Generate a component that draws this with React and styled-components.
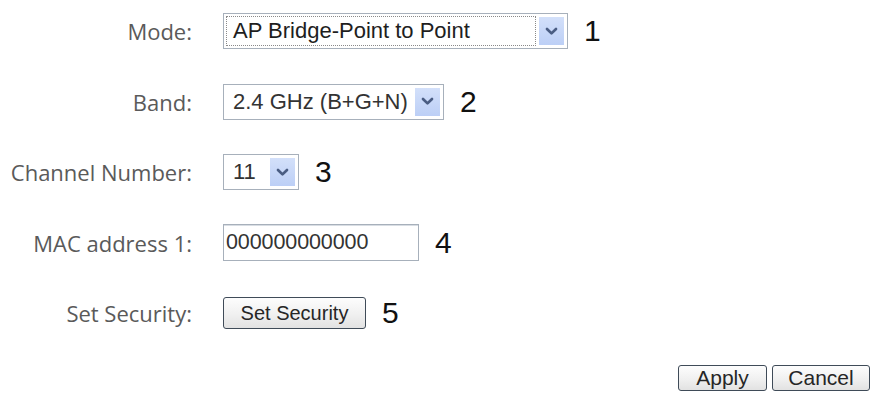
import React from "react";
import styled, { createGlobalStyle } from "styled-components";

const GlobalStyle = createGlobalStyle`
  html, body {
    margin: 0;
    padding: 0;
    background: #ffffff;
  }
  body {
    width: 879px;
    height: 401px;
    overflow: hidden;
    font-family: "Liberation Sans", Arial, sans-serif;
  }
`;

const Page = styled.div`
  width: 879px;
  height: 401px;
  box-sizing: border-box;
  padding-top: 13px;
`;

const Form = styled.div`
  display: grid;
  grid-template-columns: 192px auto;
  grid-auto-rows: 36px;
  column-gap: 31px;
  row-gap: 34.5px;
  align-items: center;
`;

const Label = styled.div`
  font-family: "Open Sans", "DejaVu Sans", sans-serif;
  font-size: 22px;
  color: #5a5a5a;
  text-align: right;
  white-space: nowrap;
`;

const Field = styled.div`
  display: flex;
  align-items: center;
  gap: 16px;
  height: 36px;
`;

const SelectBox = styled.div`
  box-sizing: border-box;
  width: ${(p) => p.width}px;
  height: 36px;
  border: 1px solid #a7b0bb;
  background: #fff;
  display: flex;
  align-items: center;
  padding: 2px 3px 2px 2px;
`;

const SelectValue = styled.div`
  flex: 1;
  height: 100%;
  box-sizing: border-box;
  display: flex;
  align-items: center;
  padding-left: 6px;
  font-size: 22px;
  color: ${(p) => (p.focused ? "#1e1e1e" : "#333")};
  border: 1px ${(p) => (p.focused ? "dotted #8a8a8a" : "solid transparent")};
  margin-right: 3px;
  white-space: nowrap;
`;

const ArrowButton = styled.div`
  width: 25px;
  height: 28px;
  flex-shrink: 0;
  background: linear-gradient(180deg, #d3e0fa 0%, #bccff6 100%);
  display: flex;
  align-items: center;
  justify-content: center;
`;

const Chevron = () => (
  <svg width="13" height="9" viewBox="0 0 13 9">
    <path
      d="M2 2 L6.5 6.4 L11 2"
      fill="none"
      stroke="#4a5d83"
      strokeWidth="2.7"
      strokeLinecap="round"
      strokeLinejoin="round"
    />
  </svg>
);

const TextInput = styled.div`
  box-sizing: border-box;
  width: 196px;
  height: 37px;
  border: 1px solid #a7b0bb;
  box-shadow: inset 0 1px 0 #d8dde3;
  display: flex;
  align-items: center;
  padding-left: 2px;
  font-size: 21.5px;
  color: #333;
  letter-spacing: -0.1px;
`;

const Button = styled.div`
  box-sizing: border-box;
  width: ${(p) => p.width}px;
  height: ${(p) => p.height}px;
  border: 1.5px solid #3f4b58;
  border-radius: 3px;
  background: linear-gradient(180deg, #fdfdfd 0%, #f0f0f0 55%, #e2e2e2 100%);
  display: flex;
  align-items: center;
  justify-content: center;
  font-size: ${(p) => p.size}px;
  color: #262626;
  white-space: nowrap;
`;

const Marker = styled.div`
  font-size: 30px;
  color: #111;
  line-height: 1;
`;

const Footer = styled.div`
  display: flex;
  justify-content: flex-end;
  gap: 5px;
  padding-right: 9px;
  margin-top: 34px;
`;

const Select = ({ width, value, focused }) => (
  <SelectBox width={width}>
    <SelectValue focused={focused}>{value}</SelectValue>
    <ArrowButton>
      <Chevron />
    </ArrowButton>
  </SelectBox>
);

export default function App() {
  return (
    <>
      <GlobalStyle />
      <Page>
        <Form>
          <Label>Mode:</Label>
          <Field>
            <Select width={345} value="AP Bridge-Point to Point" focused />
            <Marker>1</Marker>
          </Field>

          <Label>Band:</Label>
          <Field>
            <Select width={221} value="2.4 GHz (B+G+N)" />
            <Marker>2</Marker>
          </Field>

          <Label>Channel Number:</Label>
          <Field>
            <Select width={76} value="11" />
            <Marker>3</Marker>
          </Field>

          <Label>MAC address 1:</Label>
          <Field>
            <TextInput>000000000000</TextInput>
            <Marker>4</Marker>
          </Field>

          <Label>Set Security:</Label>
          <Field>
            <Button width={143} height={32} size={20}>
              Set Security
            </Button>
            <Marker>5</Marker>
          </Field>
        </Form>
        <Footer>
          <Button width={89} height={26} size={21}>
            Apply
          </Button>
          <Button width={98} height={26} size={21}>
            Cancel
          </Button>
        </Footer>
      </Page>
    </>
  );
}
